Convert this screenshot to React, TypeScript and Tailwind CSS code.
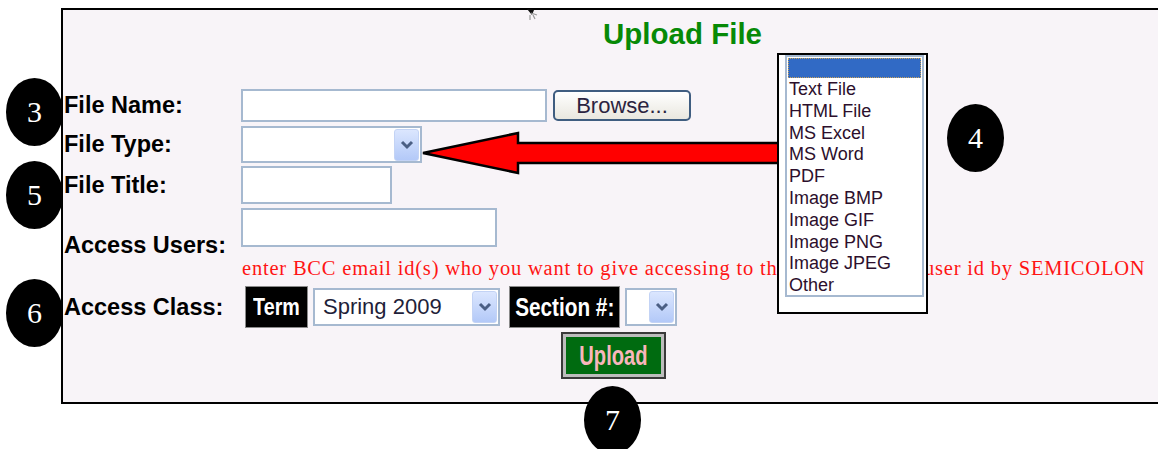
const sans = "font-['Liberation_Sans',Arial,sans-serif]";
const labelCls = `${sans} font-bold text-[23.5px] leading-[23px] text-black`;

// little blue XP style drop button with a chevron
const DropButton = () => (
  <span className="flex h-[32px] w-[25px] items-center justify-center rounded-[3px] border border-[#c3d3f5] bg-linear-to-b from-[#dbe6fe] to-[#b3c9f8]">
    <svg width="14" height="10" viewBox="0 0 14 10">
      <path d="M2 2 L7 7 L12 2" stroke="#4b5f84" strokeWidth="3" fill="none" />
    </svg>
  </span>
);

const Marker = ({ n, className }: { n: string; className: string }) => (
  <div
    className={`absolute flex h-[68px] w-[57px] items-center justify-center rounded-[50%] bg-black font-['Liberation_Serif','Times_New_Roman',serif] text-[30px] leading-none text-white ${className}`}
  >
    {n}
  </div>
);

const fileTypes = [
  'Text File',
  'HTML File',
  'MS Excel',
  'MS Word',
  'PDF',
  'Image BMP',
  'Image GIF',
  'Image PNG',
  'Image JPEG',
  'Other',
];

export default function App() {
  return (
    <div className="relative h-[449px] w-[1158px] overflow-hidden bg-white">
      <div className="ml-[61px] mt-[8px] h-[396px] w-[1120px] border-y-2 border-l-2 border-black bg-[#f8f4f8]">
        <h1 className={`${sans} pl-[540px] pt-[9px] text-[29.5px] font-bold leading-[29px] text-[#078a07]`}>
          Upload File
        </h1>

        {/* file name */}
        <div className="mt-[41px] flex h-[33px] items-center">
          <div className={`${labelCls} w-[178px] pl-[1px]`}>File Name:</div>
          <div className="h-[33px] w-[306px] border-2 border-[#a6b9d0] bg-white" />
          <button
            className={`${sans} ml-[6px] h-[31px] w-[138px] rounded-[5px] border-2 border-[#3f5d80] bg-linear-to-b from-[#ffffff] to-[#e9e7df] text-[22px] leading-none text-[#2b2440]`}
          >
            Browse...
          </button>
        </div>

        {/* file type */}
        <div className="mt-[4px] flex h-[37px] items-center">
          <div className={`${labelCls} w-[178px] pl-[1px]`}>File Type:</div>
          <div className="flex h-[37px] w-[181px] items-center justify-end border-2 border-[#a6b9d0] bg-white pr-[1px]">
            <DropButton />
          </div>
        </div>

        {/* file title */}
        <div className="mt-[3px] flex h-[38px] items-center">
          <div className={`${labelCls} w-[178px] pl-[1px]`}>File Title:</div>
          <div className="h-[38px] w-[151px] border-2 border-[#a6b9d0] bg-white" />
        </div>

        {/* access users */}
        <div className="mt-[4px] flex">
          <div className={`${labelCls} w-[178px] pl-[1px] pt-[26px]`}>Access Users:</div>
          <div>
            <div className="h-[39px] w-[256px] border-2 border-[#a6b9d0] bg-white" />
            <p className="mt-[11px] whitespace-nowrap pl-[1px] font-['Liberation_Serif','Times_New_Roman',serif] text-[20.5px] leading-[20px] tracking-[0.8px] text-[#ff1414]">
              enter BCC email id(s) who you want to give accessing to this file. Separate user id by SEMICOLON
            </p>
          </div>
        </div>

        {/* access class */}
        <div className="mt-[8px] flex h-[42px] items-center">
          <div className={`${labelCls} w-[178px] pl-[1px]`}>Access Class:</div>
          <div className="ml-[4px] flex h-[42px] w-[63px] items-center justify-center border border-[#8a8a8a] bg-black">
            <span className={`${sans} inline-block scale-x-[0.82] text-[24px] font-bold leading-none text-white`}>Term</span>
          </div>
          <div className="ml-[5px] flex h-[38px] w-[187px] items-center justify-between border-2 border-[#a6b9d0] bg-white pl-[8px] pr-[1px]">
            <span className={`${sans} text-[22px] leading-none text-[#1f1f3a]`}>Spring 2009</span>
            <DropButton />
          </div>
          <div className="ml-[9px] flex h-[42px] w-[111px] items-center justify-center border border-[#8a8a8a] bg-black">
            <span className={`${sans} inline-block scale-x-[0.83] whitespace-nowrap text-[25px] font-bold leading-none text-white`}>
              Section #:
            </span>
          </div>
          <div className="ml-[5px] flex h-[38px] w-[52px] items-center justify-end border-2 border-[#a6b9d0] bg-white pr-[1px]">
            <DropButton />
          </div>
        </div>

        {/* upload */}
        <div className="mt-[4px] pl-[498px]">
          <button className="h-[47px] w-[105px] border-2 border-[#3a3a3a] p-0">
            <span className="flex h-full w-full items-center justify-center border-[3px] border-[#bdbdbd] bg-[#006b10]">
              <span className={`${sans} inline-block scale-x-[0.72] text-[28px] font-bold leading-none text-[#f8b6bc]`}>
                Upload
              </span>
            </span>
          </button>
        </div>
      </div>

      {/* mouse cursor smudge */}
      <svg className="absolute left-[524px] top-[8px]" width="16" height="16" viewBox="0 0 16 16">
        <path d="M3 1 L10 2 L8 7 Z" fill="#111" />
        <path d="M7 5 L13 7 M6 7 L6 12 M9 7 L11 11" stroke="#999" strokeWidth="1.2" />
      </svg>

      {/* pointer arrow */}
      <svg className="absolute left-[420px] top-[130px]" width="362" height="46" viewBox="0 0 362 46">
        <polygon
          points="3,23 98,3 98,13 360,13 360,33 98,33 98,43"
          fill="#ff0000"
          stroke="#000"
          strokeWidth="2.5"
          strokeLinejoin="miter"
        />
      </svg>

      {/* opened file type list */}
      <div className="absolute left-[777px] top-[53px] h-[261px] w-[151px] border-2 border-black bg-white">
        <div className="ml-[6px] h-[242px] w-[139px] border-2 border-[#a6b9d0] bg-white">
          <div className="mx-[1px] mt-[1px] h-[20px] border border-dotted border-[#c9a25a] bg-[#316ac5]" />
          <ul className={`${sans} pl-[2px] pt-[1px] text-[18px] leading-[21.8px] text-[#2c0f2c]`}>
            {fileTypes.map((t) => (
              <li key={t}>{t}</li>
            ))}
          </ul>
        </div>
      </div>

      <Marker n="3" className="left-[6px] top-[78px]" />
      <Marker n="5" className="left-[6px] top-[161px]" />
      <Marker n="6" className="left-[6px] top-[279px]" />
      <Marker n="4" className="left-[947px] top-[104px]" />
      <Marker n="7" className="left-[584px] top-[386px]" />
    </div>
  );
}
